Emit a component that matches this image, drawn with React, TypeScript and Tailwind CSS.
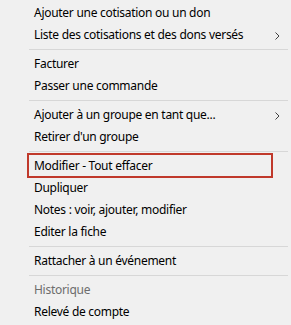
import React from 'react';

type Entry =
  | { kind: 'item'; label: string; sub?: boolean; disabled?: boolean; boxed?: boolean }
  | { kind: 'sep' };

const MENU: Entry[] = [
  { kind: 'item', label: 'Ajouter une cotisation ou un don' },
  { kind: 'item', label: 'Liste des cotisations et des dons versés', sub: true },
  { kind: 'sep' },
  { kind: 'item', label: 'Facturer' },
  { kind: 'item', label: 'Passer une commande' },
  { kind: 'sep' },
  { kind: 'item', label: 'Ajouter à un groupe en tant que...', sub: true },
  { kind: 'item', label: "Retirer d'un groupe" },
  { kind: 'sep' },
  { kind: 'item', label: 'Modifier - Tout effacer', boxed: true },
  { kind: 'item', label: 'Dupliquer' },
  { kind: 'item', label: 'Notes : voir, ajouter, modifier' },
  { kind: 'item', label: 'Editer la fiche' },
  { kind: 'sep' },
  { kind: 'item', label: 'Rattacher à un événement' },
  { kind: 'sep' },
  { kind: 'item', label: 'Historique', disabled: true },
  { kind: 'item', label: 'Relevé de compte' },
];

function Chevron() {
  return (
    <svg width="5" height="8" viewBox="0 0 5 8" className="absolute right-[11px] top-[8px]">
      <polyline points="0.5,0.5 4,4 0.5,7.5" fill="none" stroke="#404040" strokeWidth="1" />
    </svg>
  );
}

export default function App() {
  return (
    <div
      className="w-[291px] h-[325px] overflow-hidden bg-[#f0f0f0] pt-[2px] text-[12px] tracking-[-0.28px] text-black"
      style={{ fontFamily: '"Segoe UI", "Noto Sans", "Open Sans", sans-serif' }}
    >
      {MENU.map((e, i) =>
        e.kind === 'sep' ? (
          <div key={i} className="h-[7px] flex items-center pl-[29px] pr-[3px]">
            <div className="h-px w-full bg-[#d7d7d7]" />
          </div>
        ) : (
          <div
            key={i}
            className={`relative h-[22px] leading-[22px] pl-[34px] whitespace-nowrap ${
              e.disabled ? 'text-[#6d6d6d]' : ''
            }`}
          >
            {e.label}
            {e.sub && <Chevron />}
            {e.boxed && (
              <div className="absolute left-[27px] top-[-2px] w-[246px] h-[25px] border-2 border-[#c0392b]" />
            )}
          </div>
        )
      )}
    </div>
  );
}
